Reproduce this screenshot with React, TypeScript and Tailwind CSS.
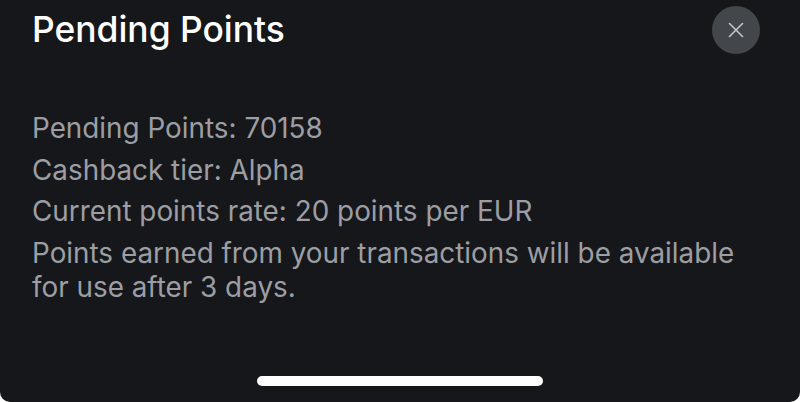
import { X } from 'lucide-react'

export default function App() {
  return (
    <div
      className="relative w-[800px] h-[402px] overflow-hidden bg-[#16171b] rounded-b-[10px] flex flex-col px-8"
      style={{ fontFamily: 'Inter, sans-serif' }}
    >
      <div className="flex items-center justify-between h-[60px] mr-2">
        <h1 className="text-[35.4px] leading-[60px] font-medium text-white">Pending Points</h1>
        <button className="w-12 h-12 rounded-full bg-[#43464b] flex items-center justify-center">
          <X className="w-[26px] h-[26px] text-[#c4c6ca]" strokeWidth={1.5} />
        </button>
      </div>
      <div className="mt-[48px] text-[27.85px] leading-[41.7px] text-[#9c9ea3]">
        <p>Pending Points: 70158</p>
        <p>Cashback tier: Alpha</p>
        <p>Current points rate: 20 points per EUR</p>
        <p className="leading-[34px] mt-[3px]">
          Points earned from your transactions will be available
          <br />
          for use after 3 days.
        </p>
      </div>
      <div className="absolute bottom-4 left-[257px] w-[286px] h-[10px] rounded-full bg-white" />
    </div>
  )
}
